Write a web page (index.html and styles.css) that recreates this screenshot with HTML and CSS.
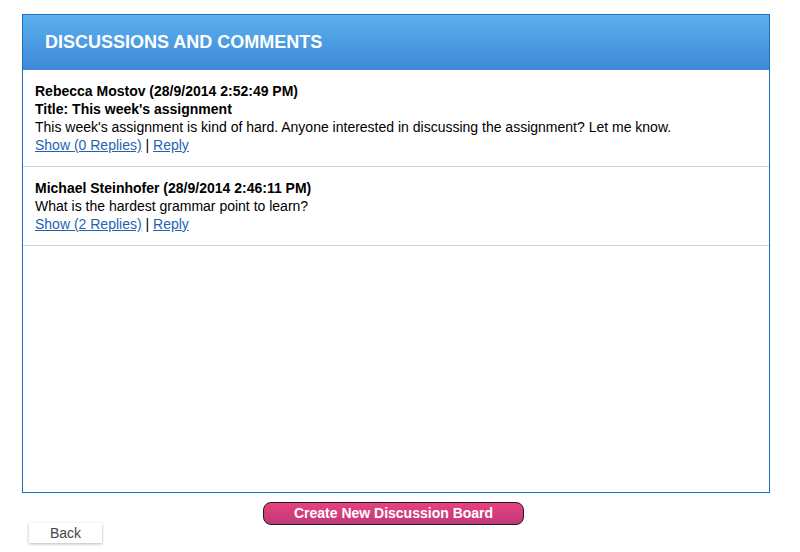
FILE: index.html
```html
<!DOCTYPE html>
<html>
<head>
<meta charset="utf-8">
<link rel="stylesheet" href="styles.css">
</head>
<body>
<div class="page">
  <div class="panel">
    <div class="panel-head">DISCUSSIONS AND COMMENTS</div>
    <div class="item">
      <div class="meta">Rebecca Mostov (28/9/2014 2:52:49 PM)</div>
      <div class="meta">Title: This week's assignment</div>
      <div class="text">This week's assignment is kind of hard. Anyone interested in discussing the assignment? Let me know.</div>
      <div class="links"><a href="#">Show (0 Replies)</a> | <a href="#">Reply</a></div>
    </div>
    <div class="item">
      <div class="meta">Michael Steinhofer (28/9/2014 2:46:11 PM)</div>
      <div class="text">What is the hardest grammar point to learn?</div>
      <div class="links"><a href="#">Show (2 Replies)</a> | <a href="#">Reply</a></div>
    </div>
  </div>
  <div class="actions">
    <button class="create">Create New Discussion Board</button>
  </div>
  <div class="back-row">
    <button class="back">Back</button>
  </div>
</div>
</body>
</html>
```
FILE: styles.css
```css
* { box-sizing: border-box; }
html, body { margin: 0; padding: 0; background: #fff; }
body {
  font-family: "Liberation Sans", Arial, sans-serif;
  font-size: 14px;
  color: #000;
}
.page {
  width: 800px;
  height: 552px;
  padding: 14px 0 0 22px;
}
.panel {
  width: 748px;
  height: 479px;
  border: 1px solid #1a6fc2;
  background: #fff;
}
.panel-head {
  height: 55px;
  background: linear-gradient(to bottom, #5bb0ee, #3d88d8);
  color: #fff;
  font-weight: bold;
  font-size: 18px;
  line-height: 55px;
  padding-left: 22px;
}
.item {
  padding: 12px;
  border-bottom: 1px solid #d4d4d4;
  line-height: 18px;
}
.meta { font-weight: bold; }
.links a { color: #1f63b3; text-decoration: underline; }
.actions {
  display: flex;
  justify-content: center;
  width: 748px;
  margin-top: 9px;
  padding-right: 5px;
}
.create {
  width: 261px;
  height: 23px;
  border: 1px solid #1a1a1a;
  border-radius: 8px;
  background: linear-gradient(to bottom, #e9417e, #bd3a78);
  color: #fff;
  font-family: "Liberation Sans", Arial, sans-serif;
  font-weight: bold;
  font-size: 14px;
  padding: 0;
  line-height: 21px;
}
.back-row {
  margin-top: -2px;
  padding-left: 7px;
}
.back {
  width: 73px;
  height: 20px;
  border: none;
  background: #fff;
  box-shadow: 0 1px 3px rgba(0,0,0,0.28);
  color: #444;
  font-family: "Liberation Sans", Arial, sans-serif;
  font-size: 14px;
  padding: 0;
  line-height: 20px;
}
```
